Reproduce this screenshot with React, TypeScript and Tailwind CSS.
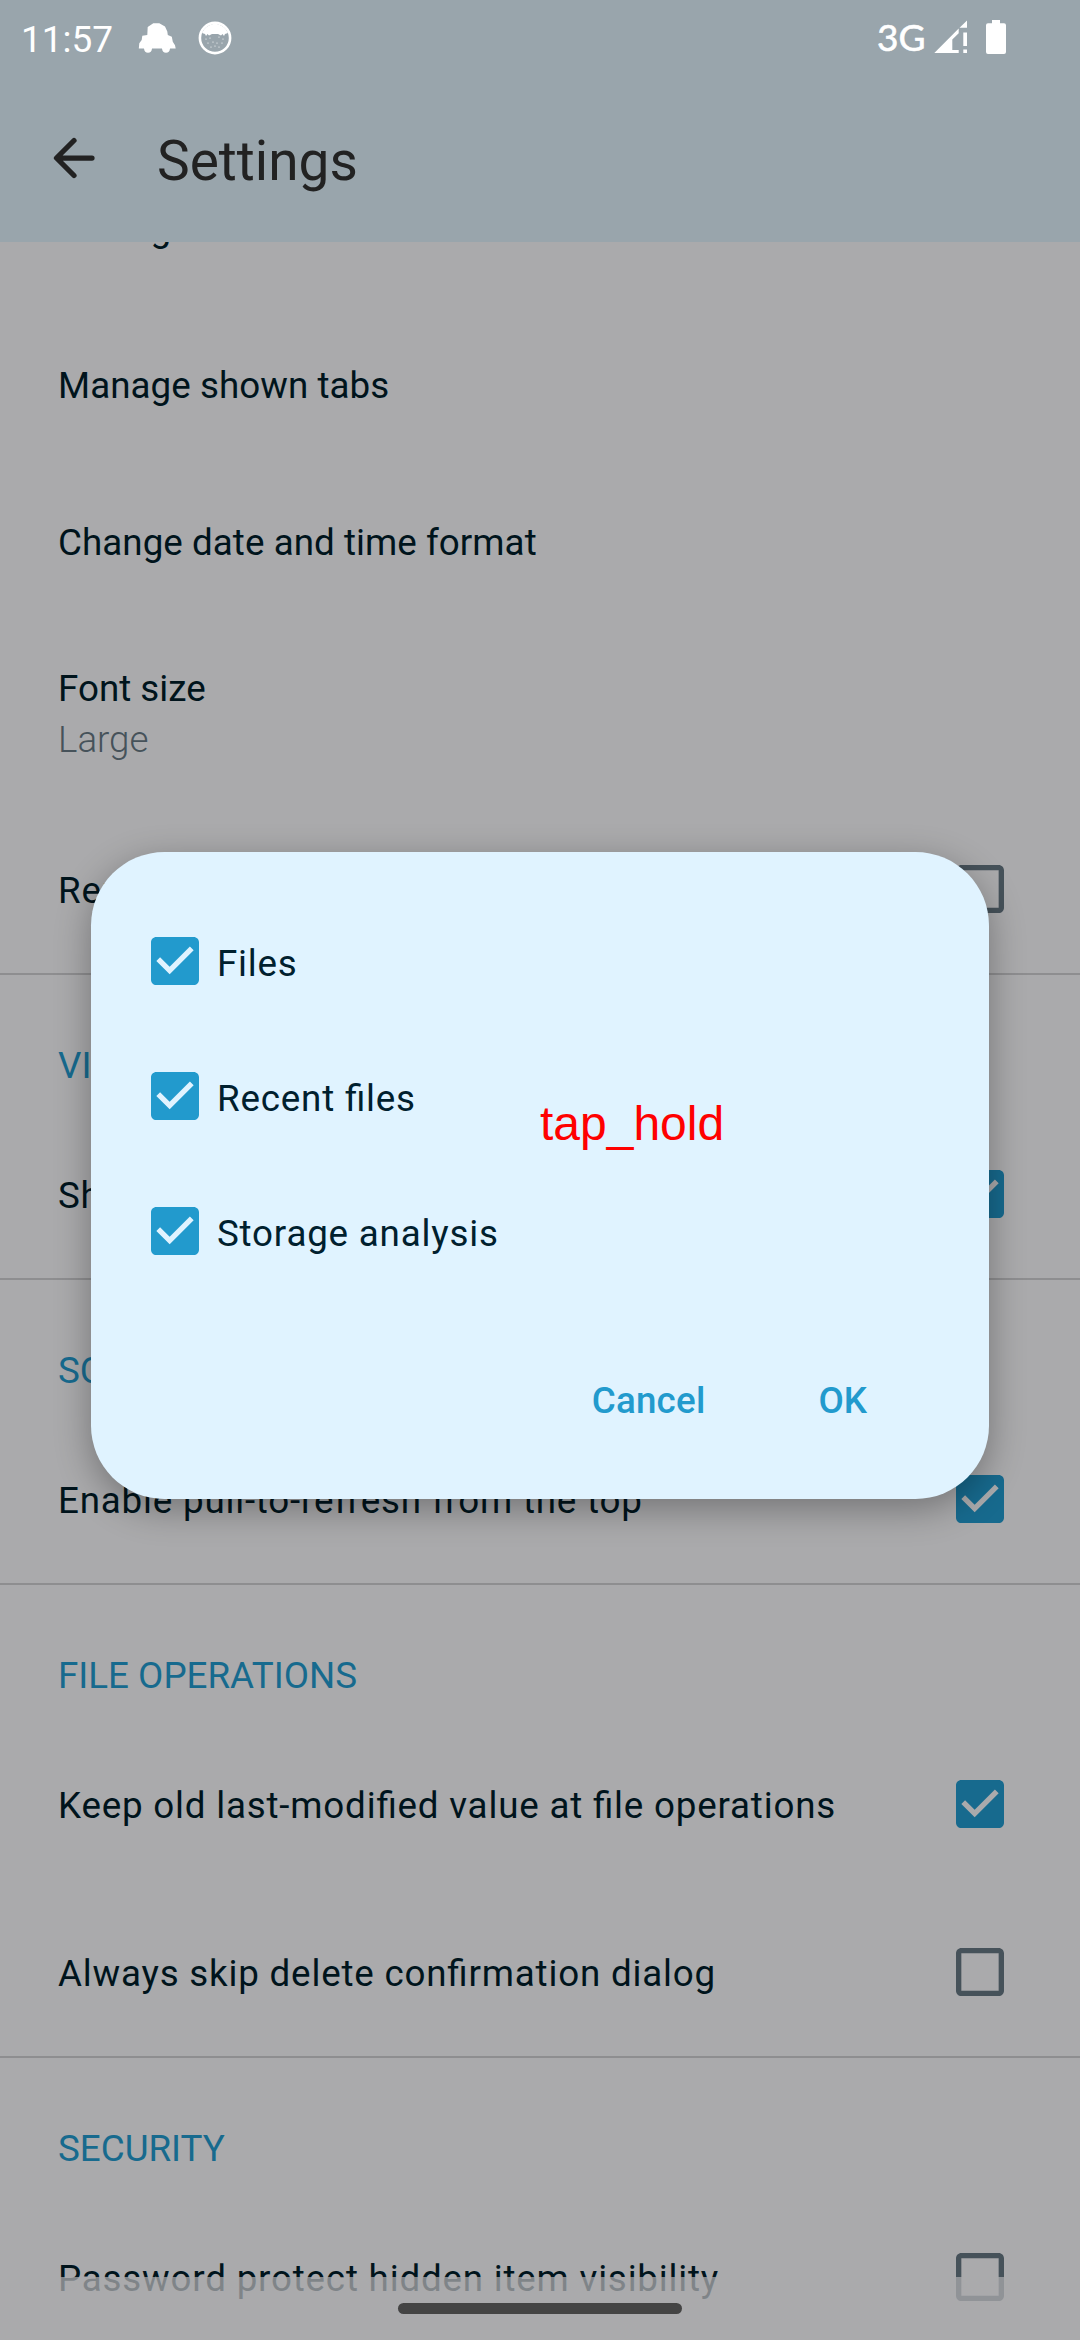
import React from "react";

function Check({ checked, tone }: { checked: boolean; tone: "dim" | "bright" }) {
  const fill = tone === "dim" ? "fill-[#176a8e]" : "fill-[#229acd]";
  return (
    <svg viewBox="3 3 18 18" className="size-12 shrink-0">
      {checked ? (
        <path
          className={fill}
          d="M19,3H5C3.89,3 3,3.9 3,5v14c0,1.1 0.89,2 2,2h14c1.11,0 2,-0.9 2,-2V5C21,3.9 20.11,3 19,3zM10,17l-5,-5 1.41,-1.41L10,14.17l7.59,-7.59L19,8L10,17z"
        />
      ) : (
        <path
          className="fill-[#46525a]"
          d="M19,5v14H5V5H19M19,3H5C3.9,3 3,3.9 3,5v14c0,1.1 0.9,2 2,2h14c1.1,0 2,-0.9 2,-2V5C21,3.9 20.1,3 19,3z"
        />
      )}
    </svg>
  );
}

function Row({ label }: { label: string }) {
  return (
    <div className="flex h-[157px] shrink-0 items-center pl-[58px]">
      <span className="tracking-[0.05px] [font-feature-settings:'liga'_1]">{label}</span>
    </div>
  );
}

function CheckRow({ label, checked = false }: { label: string; checked?: boolean }) {
  return (
    <div className="flex h-42 shrink-0 items-center justify-between pr-[76px] pl-[58px]">
      <span className="pt-[3px] tracking-[0.8px] [font-feature-settings:'liga'_1]">{label}</span>
      <Check checked={checked} tone="dim" />
    </div>
  );
}

function Heading({ label }: { label: string }) {
  return (
    <div className="h-[137px] shrink-0 border-t-2 border-[#8e8e90] pt-[69px] pl-[58px] text-[#176a8e]">{label}</div>
  );
}

const SPECKLES = [
  [8, 18], [12, 17], [21, 16], [25, 18], [10, 22], [15, 21], [19, 22], [24, 22], [13, 26], [17, 25], [21, 26],
];

function StatusBar() {
  return (
    <div className="flex h-[78px] items-center pl-[21px] text-white">
      <span className="w-[117px] text-[37px]">11:57</span>
      <svg viewBox="0 0 38 32" className="h-8 w-[38px] fill-white">
        <path d="M15.3 .3h6l5.7 3.2 2.3 5 .5 3.5 4 1.7 1 5 2.2 3.5.7 3.2H32q-.5 4.3-4 4.3t-4-4.3H14q-.5 4.3-4 4.3t-4-4.3H.8l.5-5.1 2.4-3.3.6-4.3 5-.7.4-8z" />
      </svg>
      <svg viewBox="0 0 34 34" className="mb-0.5 ml-[22px] size-[34px]">
        <circle cx="17" cy="17" r="15.1" fill="none" stroke="white" strokeWidth="2.6" />
        <path d="M4 12Q7 4 17 2.500q10 1.500 13 9.500l-3 1-1 2-1.500-2-1.500 1.500-3-1.500h-6l-3 1.500L9.500 13 8 15l-1-2z" fill="white" />
        {SPECKLES.map(([x, y]) => (
          <circle key={`${x}-${y}`} cx={x} cy={y} r="0.6" fill="white" />
        ))}
      </svg>
      <span className="ml-[645px] w-[57px] pb-1.5 font-['Lato',sans-serif] text-[37px] [-webkit-text-stroke:0.6px_white]">3G</span>
      <svg viewBox="0 0 34 34" className="mb-[5px] size-[34px] fill-white">
        <path d="M.3 33L24.700 8.600V13.300L18.300 19.500V30h6.400v3zM25.500 7.700L33 .5V7.700zM29.300 12.500H33V26H29.300zM29.300 29.500H33V33H29.300z" />
      </svg>
      <svg viewBox="0 0 20 34" className="mb-[5px] ml-[18px] h-[34px] w-5 fill-white">
        <path d="M6 0h8v3.300h4q2 0 2 2V32q0 2-2 2H2q-2 0-2-2V5.300q0-2 2-2h4z" />
      </svg>
    </div>
  );
}

export default function App() {
  return (
    <div className="relative flex h-[2340px] w-[1080px] flex-col overflow-hidden bg-[#aaaaac] font-['Roboto',sans-serif] text-[36.75px] leading-[43px] text-[#00141c]">
      <header className="z-10 h-[242px] shrink-0 bg-[#99a5ac]">
        <StatusBar />
        <div className="flex h-[164px] items-center pl-[53px] text-[55px] text-[#222]">
          <svg viewBox="0 0 42 42" className="mb-[5px] size-[42px] fill-none stroke-[#222]" strokeWidth="5.25" strokeLinecap="round" strokeLinejoin="round">
            <path d="M39 21H4M21 3.5L3.5 21 21 38.5" />
          </svg>
          <h1 className="ml-[62px] pt-0.5">Settings</h1>
        </div>
      </header>
      <main className="-mt-[92px] flex flex-col">
        <Row label="Manage favorites" />
        <Row label="Manage shown tabs" />
        <Row label="Change date and time format" />
        <div className="flex h-[184px] flex-col justify-center gap-2 pt-0.5 pl-[58px]">
          <span>Font size</span>
          <span className="font-light text-[#46525a]">Large</span>
        </div>
        <CheckRow label="Replace zip file names" />
        <Heading label="VISIBILITY" />
        <CheckRow label="Show hidden items" checked />
        <Heading label="SCROLLING" />
        <CheckRow label="Enable pull-to-refresh from the top" checked />
        <Heading label="FILE OPERATIONS" />
        <CheckRow label="Keep old last-modified value at file operations" checked />
        <CheckRow label="Always skip delete confirmation dialog" />
        <Heading label="SECURITY" />
        <CheckRow label="Password protect hidden item visibility" />
      </main>
      <div className="absolute inset-x-0 bottom-0 flex h-[63px] justify-center bg-[#aaaaac]/75 pt-[26px]">
        <div className="h-[11px] w-[284px] rounded-full bg-[#444]" />
      </div>
      <div className="absolute top-[852px] left-[91px] z-20 h-[647px] w-[898px] rounded-[73.5px] bg-[#e0f3ff] pt-[85px] text-[#00202e] shadow-[0_10px_36px_rgba(0,0,0,0.32)]">
        <div className="flex flex-col gap-[87px] pl-[60px]">
          {["Files", "Recent files", "Storage analysis"].map((t) => (
            <div key={t} className="flex h-12 items-center gap-[18px]">
              <Check checked tone="bright" />
              <span className="pt-[5px] tracking-[0.8px] [font-feature-settings:'liga'_1]">{t}</span>
            </div>
          ))}
        </div>
        <div className="mt-[124px] flex justify-end gap-[113px] pr-[122px] font-medium text-[#229acd]">
          <span className="tracking-[0.2px]">Cancel</span>
          <span>OK</span>
        </div>
      </div>
      <div className="absolute top-[1096px] left-[540px] z-30 font-['Liberation_Sans',sans-serif] text-[48px] leading-[55px] text-[#ff0000]">
        tap_hold
      </div>
    </div>
  );
}
